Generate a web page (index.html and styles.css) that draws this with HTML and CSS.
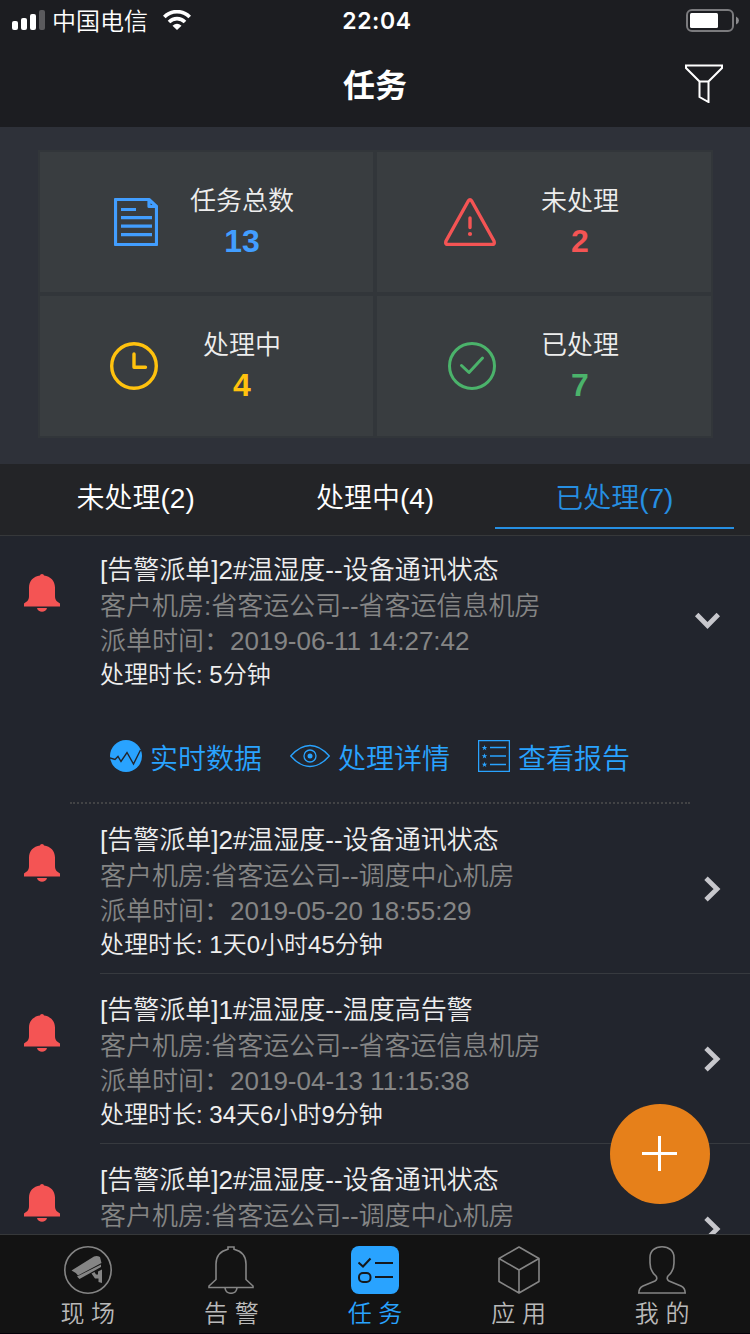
FILE: index.html
```html
<!DOCTYPE html>
<html lang="zh-CN">
<head>
<meta charset="utf-8">
<title>任务</title>
<link rel="stylesheet" href="styles.css">
</head>
<body>
<svg class="defs" width="0" height="0">
  <symbol id="bell" viewBox="0 0 36 38"><path d="M16 1.500Q16 0 18 0T20 1.500C26.500 2.300 31 7 31 13.500V22C31 26.500 33 27.500 36 29.500V32.500H0V29.500C3 27.500 5 26.500 5 22V13.500C5 7 9.500 2.300 16 1.500ZM13 34H23C22 39 14 39 13 34Z"/></symbol>
  <symbol id="chevron" viewBox="0 0 17 26"><path d="M2 2.200 13 13 2 23.800" fill="none" stroke="currentColor" stroke-width="4.800"/></symbol>
</svg>
<div class="app">
  <header class="header">
    <div class="status">
      <div class="carrier">
        <svg class="signal" width="33" height="20" viewBox="0 0 33 20"><rect y="11" width="6" height="9" rx="2"/><rect x="9" y="8" width="6" height="12" rx="2"/><rect x="18" y="4" width="6" height="16" rx="2"/><rect x="27" width="6" height="20" rx="2" class="weak"/></svg>
        <span>中国电信</span>
        <svg class="wifi" width="28" height="20" viewBox="0 0 28 20"><path d="M1.300 7C8-.2 20-.2 26.700 7M6 12C10.500 7.500 17.500 7.500 22 12" fill="none" stroke="#fff" stroke-width="3.600"/><path d="M9.500 15.700Q14 12 18.500 15.700L14 20Z"/></svg>
      </div>
      <div class="time">22:04</div>
      <svg class="battery" width="53" height="23" viewBox="0 0 53 23"><rect x="1" y="1" width="46" height="21" rx="5" fill="none" stroke="#7b7b7e" stroke-width="2"/><rect x="4" y="4" width="28" height="15" rx="1.500"/><path d="M50 7.500Q53 9 53 11.500T50 15.500Z" fill="#8b8b8e"/></svg>
    </div>
    <div class="nav">
      <h1>任务</h1>
      <svg class="filter" width="38" height="39" viewBox="0 0 38 39"><path d="M1 1.500H37V4L23.500 17.500V38L14.500 33V17.500L1 4ZM14.500 17.500H23.500" fill="none" stroke="#fff" stroke-width="2"/></svg>
    </div>
  </header>

  <section class="summary">
    <div class="grid">
      <div class="cell blue"><div class="ico"><svg width="44" height="48" viewBox="0 0 44 48"><path d="M2.500 1.500H35L42.500 8.500V46.500H1.500V1.500ZM35 1.500V8.500H42.500M7 11.500H22M7 19.700H38M7 28.200H38M7 36.600H38" fill="none" stroke="currentColor" stroke-width="3.200" stroke-linejoin="round"/></svg></div><div class="txt"><span>任务总数</span><b>13</b></div></div>
      <div class="cell red"><div class="ico"><svg width="52" height="48" viewBox="0 0 52 48"><path d="M24.300 3Q26 .5 27.700 3L50 43Q51 46.400 48.500 46.400H3.500Q1 46.400 2 43ZM26 20V29.500" fill="none" stroke="currentColor" stroke-width="3.400" stroke-linejoin="round" stroke-linecap="round"/><circle cx="26" cy="36" r="2.100" fill="currentColor"/></svg></div><div class="txt"><span>未处理</span><b>2</b></div></div>
      <div class="cell yellow"><div class="ico"><svg width="48" height="48" viewBox="0 0 48 48"><g fill="none" stroke="currentColor" stroke-width="3.400" stroke-linecap="round" stroke-linejoin="round"><circle cx="24" cy="24" r="22.300"/><path d="M24 12V25.300H35.500"/></g></svg></div><div class="txt"><span>处理中</span><b>4</b></div></div>
      <div class="cell green"><div class="ico"><svg width="48" height="48" viewBox="0 0 48 48"><g fill="none" stroke="currentColor" stroke-width="3" stroke-linecap="round" stroke-linejoin="round"><circle cx="24" cy="24" r="22.500"/><path d="M13.500 23.500 21 30.500 34.500 16"/></g></svg></div><div class="txt"><span>已处理</span><b>7</b></div></div>
    </div>
  </section>

  <nav class="tabs">
    <div class="tab">未处理(2)</div>
    <div class="tab">处理中(4)</div>
    <div class="tab active">已处理(7)</div>
  </nav>

  <main class="list">
    <article class="item open">
      <div class="row">
        <svg class="bell"><use href="#bell"/></svg>
        <div class="info">
          <div class="title">[告警派单]2#温湿度--设备通讯状态</div>
          <div class="sub">客户机房:省客运公司--省客运信息机房</div>
          <div class="sub date">派单时间：2019-06-11 14:27:42</div>
          <div class="dur">处理时长: 5分钟</div>
        </div>
        <svg class="chev"><use href="#chevron"/></svg>
      </div>
      <div class="actions">
        <div class="act"><svg width="32" height="32" viewBox="0 0 32 32"><circle cx="16" cy="16" r="16" fill="currentColor"/><path d="M0 18 5 19.500 8 16.500 11 21.500 17 12.500 23.500 24 30.500 10" fill="none" stroke="#22252d" stroke-width="1.400"/></svg><span>实时数据</span></div>
        <div class="act"><svg width="40" height="32" viewBox="0 0 40 32"><g fill="none" stroke="currentColor" stroke-width="1.300"><path d="M.7 16Q10 5.500 20 5.500T39.300 16Q30 26.500 20 26.500T.7 16Z"/><circle cx="20" cy="16" r="6"/></g><circle cx="20" cy="16" r="2.500" fill="currentColor"/></svg><span>处理详情</span></div>
        <div class="act"><svg width="32" height="32" viewBox="0 0 32 32"><path d="M.6.6H31.400V31.400H.6ZM12 7.500H28M12 16H28M12 24.500H28" fill="none" stroke="currentColor" stroke-width="1.300"/><g fill="currentColor"><path id="star" d="M6.500 5 7.200 7H9.300L7.600 8.200 8.300 10.300 6.500 9 4.700 10.300 5.400 8.200 3.700 7H5.800Z"/><use href="#star" y="8.300"/><use href="#star" y="16.700"/></g></svg><span>查看报告</span></div>
      </div>
    </article>
    <article class="item">
      <div class="row">
        <svg class="bell"><use href="#bell"/></svg>
        <div class="info">
          <div class="title">[告警派单]2#温湿度--设备通讯状态</div>
          <div class="sub">客户机房:省客运公司--调度中心机房</div>
          <div class="sub date">派单时间：2019-05-20 18:55:29</div>
          <div class="dur">处理时长: 1天0小时45分钟</div>
        </div>
        <svg class="chev"><use href="#chevron"/></svg>
      </div>
    </article>
    <article class="item">
      <div class="row">
        <svg class="bell"><use href="#bell"/></svg>
        <div class="info">
          <div class="title">[告警派单]1#温湿度--温度高告警</div>
          <div class="sub">客户机房:省客运公司--省客运信息机房</div>
          <div class="sub date">派单时间：2019-04-13 11:15:38</div>
          <div class="dur">处理时长: 34天6小时9分钟</div>
        </div>
        <svg class="chev"><use href="#chevron"/></svg>
      </div>
    </article>
    <article class="item">
      <div class="row">
        <svg class="bell"><use href="#bell"/></svg>
        <div class="info">
          <div class="title">[告警派单]2#温湿度--设备通讯状态</div>
          <div class="sub">客户机房:省客运公司--调度中心机房</div>
        </div>
        <svg class="chev"><use href="#chevron"/></svg>
      </div>
    </article>
  </main>

  <button class="fab" aria-label="新建"><svg width="35" height="35" viewBox="0 0 35 35"><path d="M17.500 0V35M0 17.500H35" stroke="#fff" stroke-width="3"/></svg></button>

  <footer class="tabbar">
    <div class="tb"><svg width="48" height="48" viewBox="0 0 48 48"><circle cx="24" cy="24" r="23.200" fill="none" stroke="currentColor" stroke-width="1.600"/><path fill="currentColor" d="M7.500 24.500 30 10.500Q33 9.500 36 11L37.500 17 14 29.500Q12 26.500 7.500 24.500ZM13 30.500 37 18.500V21L15.500 33ZM27.500 27.500 30.500 26 32 28.500H34V25.500L38 23.500V37L34.500 36V32.500H31Z"/></svg><span>现 场</span></div>
    <div class="tb"><svg width="46" height="48" viewBox="0 0 46 48"><path d="M20 3.200V1H26V3.200C33.500 5 38 10.500 38 18V33.500L45 40V41.500H1V40L8 33.500V18C8 10.500 12.500 5 20 3.200ZM17 42C18 49 28 49 29 42" fill="none" stroke="currentColor" stroke-width="1.600"/></svg><span>告 警</span></div>
    <div class="tb on"><svg width="48" height="48" viewBox="0 0 48 48"><rect width="48" height="48" rx="8" fill="currentColor"/><g fill="none" stroke="#15181c" stroke-width="2"><path d="M7.500 16.500 12 20.500 19.500 12.500M24 17H42M24 31H42"/><rect x="8" y="27" width="11.500" height="9" rx="4"/></g></svg><span>任 务</span></div>
    <div class="tb"><svg width="42" height="48" viewBox="0 0 42 48"><path d="M21 1 41 12.500V35.500L21 47 1 35.500V12.500ZM1 12.500 21 24 41 12.500M21 24V47" fill="none" stroke="currentColor" stroke-width="1.600" stroke-linejoin="round"/></svg><span>应 用</span></div>
    <div class="tb"><svg width="48" height="48" viewBox="0 0 48 48"><path d="M24 .8C17 .8 12 5 12 11.500V17C12 23 15 27.500 18 30Q20 33 17 35L5 40Q.8 42 .8 47H47.200Q47.200 42 43 40L31 35Q28 33 30 30C33 27.500 36 23 36 17V11.500C36 5 31 .8 24 .8Z" fill="none" stroke="currentColor" stroke-width="1.600"/></svg><span>我 的</span></div>
  </footer>
</div>
</body>
</html>
```
FILE: styles.css
```css
* { box-sizing: border-box; }
body {
  margin: 0;
  background: #22252d;
  font-family: "Liberation Sans", "Noto Sans CJK SC", sans-serif;
  font-weight: 350;
  color: #fff;
}
svg { display: block; flex: none; }
.defs { position: absolute; }
.app {
  position: relative;
  width: 750px;
  height: 1334px;
  overflow: hidden;
  display: flex;
  flex-direction: column;
}
.header { flex: none; height: 127px; background: #1c1d21; }
.status {
  height: 40px;
  padding: 0 11px 0 12px;
  display: grid;
  grid-template-columns: 1fr auto 1fr;
  align-items: center;
  font-size: 24px;
  line-height: 40px;
}
.status svg { fill: #fff; }
.carrier { display: flex; align-items: center; }
.carrier span { margin: 0 15px 0 7px; padding-top: 3px; line-height: 37px; }
.signal .weak { fill: #5a5a5d; }
.time {
  padding: 2px 0 0 3px;
  font-family: Inter, sans-serif;
  font-size: 23px;
  line-height: 38px;
  font-weight: 600;
  letter-spacing: .6px;
}
.battery { justify-self: end; }
.nav {
  height: 87px;
  padding: 0 27px 0 65px;
  display: flex;
  align-items: center;
}
.nav h1 { flex: 1; margin: 0; padding-top: 4px; font-size: 32px; line-height: 48px; font-weight: 700; text-align: center; }

.summary {
  flex: none;
  height: 337px;
  padding: 23px 37px 26px 38px;
  background: #2e3139;
}
.grid {
  display: grid;
  grid-template-columns: 337px 338px;
  grid-template-rows: 144px 144px;
  background: #32363a;
}
.cell { display: flex; align-items: center; border: 2px solid #32363a; background: #393d40; }
.cell:nth-child(even) { padding-left: 1px; }
.ico { width: 118px; display: flex; justify-content: flex-end; }
.txt { width: 168px; padding-bottom: 2px; display: flex; flex-direction: column; align-items: center; gap: 4px; color: #eee; }
.txt span { font-size: 26px; line-height: 36px; }
.txt b { font-size: 32px; line-height: 36px; font-weight: 700; }
.blue .ico, .blue b { color: #429eff; }
.red .ico, .red b { color: #f45454; }
.yellow .ico, .yellow b { color: #ffc20e; }
.green .ico, .green b { color: #4bb36b; }

.tabs {
  flex: none;
  height: 72px;
  padding: 0 16px;
  display: flex;
  background: #232427;
  border-bottom: 1px solid #36383a;
}
.tab { flex: 1; height: 65px; text-align: center; font-size: 28px; line-height: 69px; }
.tab.active { color: #268fe2; border-bottom: 2px solid #268fe2; }

.list { flex: 1; min-height: 0; overflow: hidden; }
.item { height: 170px; }
.item.open { height: 268px; }
.row { height: 170px; display: flex; align-items: flex-start; }
.row::after { content: ""; width: 29px; flex: none; }
.bell { width: 36px; height: 38px; margin: 40px 40px 0 24px; fill: #f45454; }
.info { flex: 1; height: 170px; margin-right: -29px; padding-top: 18px; border-bottom: 1px solid #373a3f; white-space: nowrap; }
.open .bell { margin-top: 38px; }
.open .info { padding-top: 16px; border-bottom: 0; }
.title, .sub { font-size: 26px; line-height: 36px; }
.title { color: #eee; }
.sub { color: #858585; }
.dur { font-size: 24px; line-height: 31px; color: #eee; }
.sub.date { line-height: 35px; }
.chev { width: 17px; height: 26px; margin: 72px 0 0 -17px; color: #c7c7cc; }
.open .chev { transform: rotate(90deg); margin-left: -22px; margin-right: 5px; }
.actions {
  height: 98px;
  margin: 0 60px 0 70px;
  padding: 34px 0 0 40px;
  display: flex;
  gap: 28px;
  align-items: flex-start;
  border-bottom: 2px dotted #424345;
  color: #29a3ff;
  font-size: 28px;
  line-height: 40px;
}
.act { display: flex; align-items: flex-start; gap: 8px; }
.act span { white-space: nowrap; }

.fab {
  position: absolute;
  left: 610px;
  top: 1104px;
  width: 100px;
  height: 100px;
  padding: 0 1px 1px 0;
  border: 0;
  border-radius: 50%;
  display: flex;
  align-items: center;
  justify-content: center;
  background: #e6801a;
}
.tabbar {
  flex: none;
  height: 100px;
  padding: 11px 16px 0;
  display: flex;
  border-top: 1px solid #36383a;
  border-bottom: 1px solid #050008;
  background: #131313;
}
.tb { flex: 1; display: flex; flex-direction: column; align-items: center; color: #858585; }
.tb span { margin-top: 3px; font-size: 24px; line-height: 34px; color: #b9b9b9; }
.tb.on, .tb.on span { color: #29a3ff; }
```
